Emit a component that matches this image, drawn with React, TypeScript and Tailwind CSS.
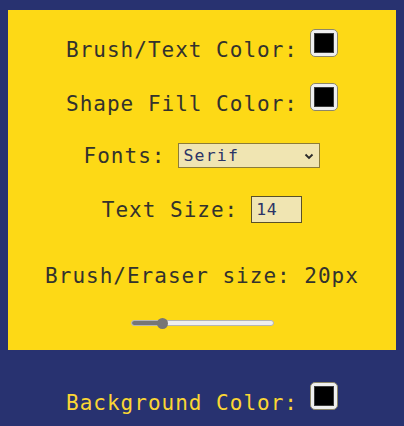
import React from "react";

const mono = { fontFamily: '"DejaVu Sans Mono", "Liberation Mono", monospace' };

function ColorBox() {
  return (
    <div className="mb-[3px] flex h-[28px] w-[28px] shrink-0 items-center justify-center rounded-[5px] border border-[#8d8769] bg-[#efefef]">
      <div className="h-[20px] w-[20px] border border-[#3a3a3a] bg-black" />
    </div>
  );
}

export default function App() {
  return (
    <div
      className="h-[426px] w-full overflow-hidden bg-[#283270] pt-[10px] text-[21px] leading-[20px] tracking-[1px]"
      style={mono}
    >
      <div className="mx-[8px] flex h-[340px] flex-col items-center bg-[#fdd916] pt-[19px] text-[#33322d]">
        <div className="flex items-end gap-[12px]">
          <span className="whitespace-pre">Brush/Text Color:</span>
          <ColorBox />
        </div>
        <div className="mt-[23px] flex items-end gap-[12px]">
          <span className="whitespace-pre">Shape Fill Color:</span>
          <ColorBox />
        </div>
        <div className="mt-[29px] flex h-[25px] items-center gap-[13px]">
          <span className="whitespace-pre">Fonts:</span>
          <div className="flex h-[25px] w-[142px] items-center justify-between border border-[#8c7c38] bg-[#f0e5b2] pl-[4px] pr-[5px] text-[16.5px] leading-[16px] tracking-[1.2px] text-[#2b3466]">
            <span>Serif</span>
            <svg width="10" height="8" viewBox="0 0 10 8" fill="none">
              <path d="M1.5 2.5 L5 6 L8.5 2.5" stroke="#2a2a2a" strokeWidth="1.8" />
            </svg>
          </div>
        </div>
        <div className="mt-[28px] flex h-[27px] items-center gap-[13px]">
          <span className="whitespace-pre">Text Size:</span>
          <div className="flex h-[27px] w-[51px] items-center border border-[#5a5028] bg-[#f0e5b2] pl-[4px] text-[16.5px] leading-[16px] tracking-[0.5px] text-[#2b3466]">
            14
          </div>
        </div>
        <div className="mt-[43px] whitespace-pre">Brush/Eraser size: 20px</div>
        <div className="relative mt-[31px] flex h-[12px] w-[143px] items-center">
          <div className="flex h-[6px] w-full overflow-hidden rounded-full border border-[#b5b5b5] bg-[#efefef]">
            <div className="h-full w-[31px] bg-[#767676]" />
          </div>
          <div className="absolute left-[26px] top-[0.5px] h-[11px] w-[11px] rounded-full bg-[#767676]" />
        </div>
      </div>
      <div className="mt-[32px] flex justify-center">
        <div className="flex items-end gap-[12px] text-[#fbd634]">
          <span className="whitespace-pre">Background Color:</span>
          <ColorBox />
        </div>
      </div>
    </div>
  );
}
